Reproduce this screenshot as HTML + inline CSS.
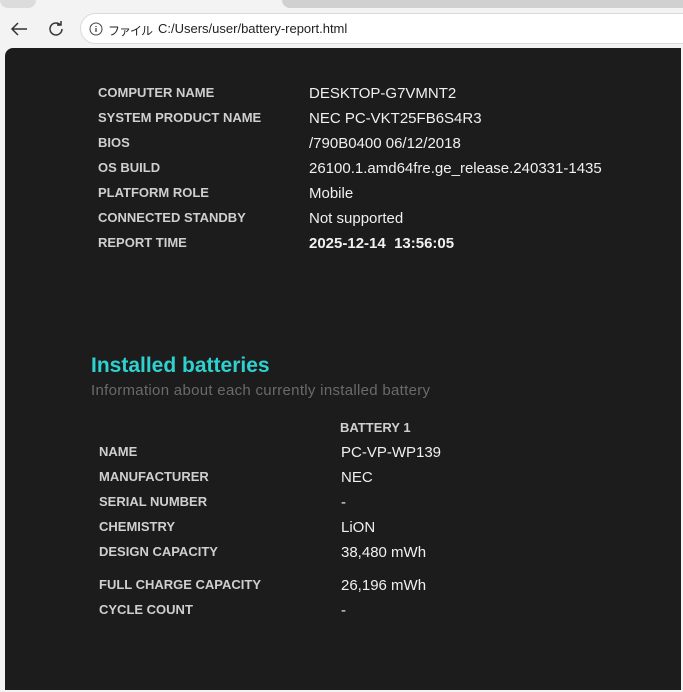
<!DOCTYPE html>
<html><head><meta charset="utf-8"><style>
body{margin:0;width:683px;height:692px;background:#f3f3f3;font-family:"Liberation Sans","Noto Sans CJK JP",sans-serif;overflow:hidden;position:relative}
*{white-space:nowrap}
.tab{position:absolute;top:0;left:0;width:36px;height:8px;background:#dcdcdc;border-radius:0 0 8px 8px}
.tab2{position:absolute;top:0;left:282px;width:401px;height:8px;background:#d0d0d0;border-radius:0 0 0 8px}
.addr{position:absolute;left:80px;top:13px;width:620px;height:31px;background:#fff;border:1px solid #dadada;border-radius:16px;box-sizing:border-box}
.addr span{position:absolute;top:7px;font-size:13px;color:#222}
.main{position:absolute;left:5px;top:48px;width:676px;height:642px;background:#1c1c1c;border-radius:8px 0 0 0}
.row{position:absolute;left:93px;height:20px;font-size:13px;font-weight:bold;color:#cfcfcf}
.v{position:absolute;font-size:15px;color:#f0f0f0;font-weight:normal}
</style></head><body>
<div class="tab"></div><div class="tab2"></div>
<svg style="position:absolute;left:9px;top:19px" width="20" height="20" viewBox="0 0 20 20"><path d="M18 10H3M9 4L3 10l6 6" stroke="#333" stroke-width="1.5" fill="none"/></svg>
<svg style="position:absolute;left:46px;top:19px" width="20" height="20" viewBox="0 0 20 20"><path d="M16 10a6 6 0 1 1-2-4.5M15 2v4h-4" stroke="#333" stroke-width="1.5" fill="none"/></svg>
<div class="addr">
<svg style="position:absolute;left:8px;top:8px" width="14" height="14" viewBox="0 0 14 14"><circle cx="7" cy="7" r="6" stroke="#444" fill="none"/><path d="M7 6v4M7 4v1" stroke="#444" stroke-width="1.3"/></svg>
<span style="left:27px;font-size:12px;letter-spacing:-1px;top:8px">ファイル</span><span style="left:77px">C:/Users/user/battery-report.html</span></div>
<div class="main">
<div class="row" style="top:37px">COMPUTER NAME<span class="v" style="left:211px;top:0">DESKTOP-G7VMNT2</span></div>
<div class="row" style="top:62px">SYSTEM PRODUCT NAME<span class="v" style="left:211px;top:0">NEC PC-VKT25FB6S4R3</span></div>
<div class="row" style="top:87px">BIOS<span class="v" style="left:211px;top:0">/790B0400 06/12/2018</span></div>
<div class="row" style="top:112px">OS BUILD<span class="v" style="left:211px;top:0">26100.1.amd64fre.ge_release.240331-1435</span></div>
<div class="row" style="top:137px">PLATFORM ROLE<span class="v" style="left:211px;top:0">Mobile</span></div>
<div class="row" style="top:162px">CONNECTED STANDBY<span class="v" style="left:211px;top:0">Not supported</span></div>
<div class="row" style="top:187px">REPORT TIME<span class="v" style="left:211px;top:0;font-weight:bold">2025-12-14&nbsp; 13:56:05</span></div>
<div style="position:absolute;left:86px;top:306px;font-size:21px;font-weight:bold;color:#2fd0d0">Installed batteries</div>
<div style="position:absolute;left:86px;top:334px;font-size:15px;color:#6a6a6a;letter-spacing:0.3px">Information about each currently installed battery</div>
<div class="row" style="left:335px;top:372px">BATTERY 1</div>
<div class="row" style="left:94px;top:396px">NAME<span class="v" style="left:242px;top:0">PC-VP-WP139</span></div>
<div class="row" style="left:94px;top:421px">MANUFACTURER<span class="v" style="left:242px;top:0">NEC</span></div>
<div class="row" style="left:94px;top:446px">SERIAL NUMBER<span class="v" style="left:242px;top:0">-</span></div>
<div class="row" style="left:94px;top:471px">CHEMISTRY<span class="v" style="left:242px;top:0">LiON</span></div>
<div class="row" style="left:94px;top:496px">DESIGN CAPACITY<span class="v" style="left:242px;top:0">38,480 mWh</span></div>
<div class="row" style="left:94px;top:529px">FULL CHARGE CAPACITY<span class="v" style="left:242px;top:0">26,196 mWh</span></div>
<div class="row" style="left:94px;top:554px">CYCLE COUNT<span class="v" style="left:242px;top:0">-</span></div>
</div>
</body></html>
